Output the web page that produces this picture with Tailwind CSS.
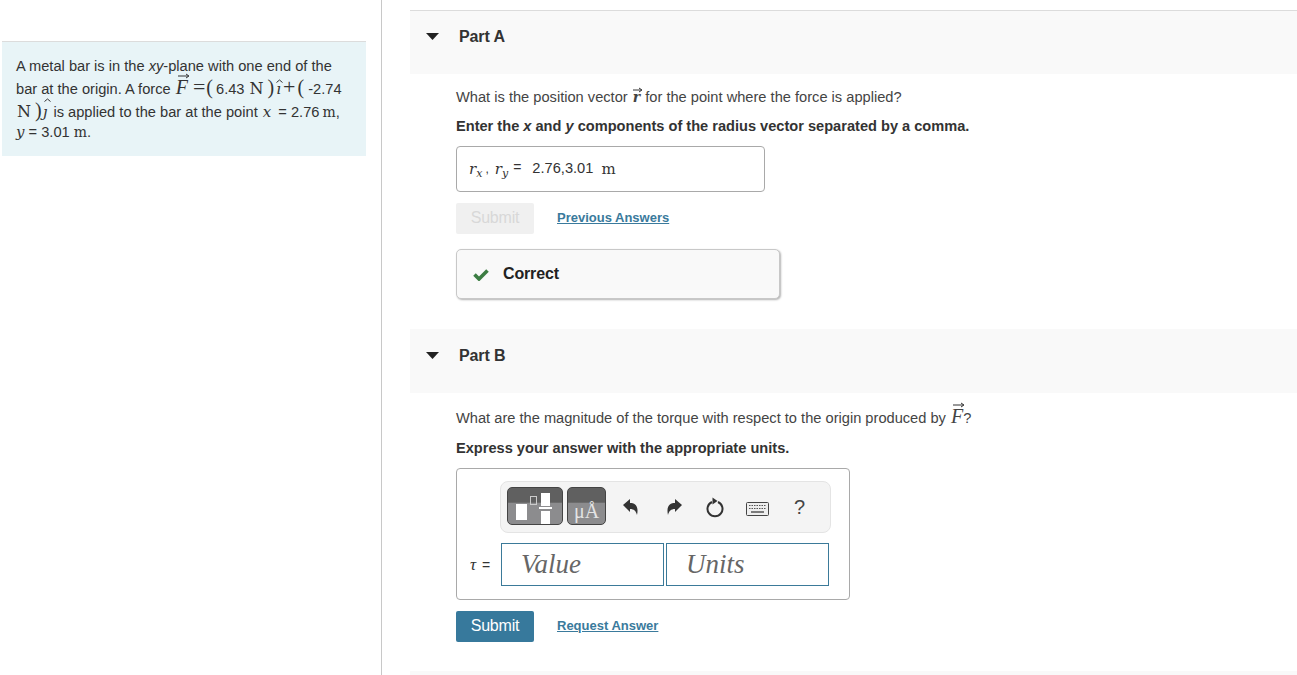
<!DOCTYPE html>
<html lang="en"><head><meta charset="utf-8"><title>Part</title>
<script src="https://cdn.jsdelivr.net/npm/@tailwindcss/browser@4"></script></head>
<body class="bg-white">
<div class="flex w-[1297px] h-[675px] overflow-hidden font-['Liberation_Sans',Arial,sans-serif] text-[14.65px] text-[#333]">
  <aside class="w-[382px] shrink-0 h-full border-r border-[#c8c8c8] pt-[41px] pl-[2px] pr-[15px]">
    <div class="h-[115px] bg-[#e8f4f7] border-t border-[#dcdcdc] pl-[14px] pr-[10px] pt-[13px] leading-[23px]">
      <p class="whitespace-nowrap">A metal bar is in the <i>xy</i>-plane with one end of the</p>
      <p class="whitespace-nowrap">bar at the origin. A force <span class="relative ml-[1px] font-['Liberation_Serif',serif] italic text-[20px] leading-[0]">F<svg class="absolute left-[2px] -top-[3px]" width="12" height="6" viewBox="0 0 12 6"><path d="M0 3h10M8 1l3 2-3 2" stroke="#333" fill="none"/></svg></span><span class="ml-[5px] font-['Liberation_Serif',serif] text-[22px] leading-[0]">=</span><span class="ml-[1px] font-['Liberation_Serif',serif] text-[20px] leading-[0]">(</span><span class="ml-[3px]">6.43</span> <span class="ml-[1px] font-['DejaVu_Serif',serif] text-[16px] leading-[0]">N</span><span class="ml-[4px] font-['Liberation_Serif',serif] text-[20px] leading-[0]">)</span><span class="relative ml-[2px] font-['DejaVu_Serif',serif] italic text-[15px] leading-[0]">ı<svg class="absolute left-[0px] -top-[1px]" width="7" height="4" viewBox="0 0 7 4"><path d="M.5 3.500 3.500 1l3 2.500" stroke="#333" fill="none"/></svg></span><span class="ml-[2px] font-['Liberation_Serif',serif] text-[22px] leading-[0]">+</span><span class="ml-[2px] font-['Liberation_Serif',serif] text-[20px] leading-[0]">(</span><span class="ml-[4px]">-2.74</span></p>
      <p class="whitespace-nowrap"><span class="ml-[1px] font-['DejaVu_Serif',serif] text-[16px] leading-[0]">N</span><span class="ml-[4px] font-['Liberation_Serif',serif] text-[20px] leading-[0]">)</span><span class="relative ml-[1px] font-['DejaVu_Serif',serif] italic text-[15px] leading-[0]">ȷ<svg class="absolute left-[1px] -top-[5px]" width="7" height="4" viewBox="0 0 7 4"><path d="M.5 3.500 3.500 1l3 2.500" stroke="#333" fill="none"/></svg></span><span class="ml-[2px]"> is applied to the bar at the point</span> <span class="ml-[1px] font-['DejaVu_Serif',serif] italic text-[15px] leading-[0]">x</span> <span class="ml-[3px]">= 2.76</span> <span class="-ml-[1px] font-['DejaVu_Serif',serif] text-[14px] leading-[0]">m</span>,</p>
      <p class="whitespace-nowrap -mt-[3px]"><span class="font-['DejaVu_Serif',serif] italic text-[15px] leading-[0]">y</span> = 3.01 <span class="font-['DejaVu_Serif',serif] text-[14px] leading-[0]">m</span>.</p>
    </div>
  </aside>
  <main class="flex-1 pl-[28px] pt-[10px]">
    <section class="h-[64px] bg-[#f9f9f9] border-t border-[#dcdcdc] flex items-start pt-[17px]">
      <svg class="ml-[16px] mt-[5px]" width="13" height="7" viewBox="0 0 13 7"><path d="M0 0h13L6.500 7z" fill="#222"/></svg>
      <h2 class="ml-[20px] font-bold text-[16px] text-[#333] leading-[18px] tracking-[-0.1px]">Part A</h2>
    </section>
    <div class="pl-[46px]">
      <p class="mt-[14px] leading-[18px] text-[#444] whitespace-nowrap">What is the position vector <span class="relative mx-[1px] font-['DejaVu_Serif',serif] italic font-bold text-[14px] leading-[0]">r<svg class="absolute left-0 -top-[2px]" width="10" height="6" viewBox="0 0 10 6"><path d="M0 3h8M6 1l3 2-3 2" stroke="#333" fill="none"/></svg></span> for the point where the force is applied?</p>
      <p class="mt-[11px] font-bold text-[14.6px] leading-[18px] whitespace-nowrap">Enter the <i>x</i> and <i>y</i> components of the radius vector separated by a comma.</p>
      <div class="mt-[11px] w-[309px] h-[46px] border border-[#a9a9a9] rounded-[4px] flex items-center pl-[12px]">
        <span class="font-['DejaVu_Serif',serif] italic text-[15px]">r<sub class="text-[11px]">x</sub></span><span class="text-[12px] ml-[3px] mr-[6px]">,</span><span class="font-['DejaVu_Serif',serif] italic text-[15px]">r<sub class="text-[11px]">y</sub></span>
        <span class="ml-[5px] -mt-[4px] text-[14px]">=</span><span class="ml-[11px]">2.76,3.01</span><span class="ml-[8px] font-['DejaVu_Serif',serif] text-[15px] leading-[1]">m</span>
      </div>
      <div class="mt-[11px] flex items-center">
        <button class="w-[78px] h-[31px] bg-[#f0f0f0] text-[#d8d8d8] text-[16px] tracking-[-0.2px] rounded-[2px] leading-[27px] pb-[2px]">Submit</button>
        <a class="ml-[23px] -mt-[2px] font-bold text-[13px] text-[#3a7a9c] underline" href="#">Previous Answers</a>
      </div>
      <div class="mt-[15px] w-[324px] h-[50px] bg-[#f9f9f9] border border-[#c8c8c8] rounded-[5px] shadow-[1px_1px_2px_rgba(0,0,0,0.3)] flex items-center pl-[16px]">
        <svg width="16" height="13" viewBox="0 0 16 13"><path d="M1.500 6.500 6 11 14.500 2.500" stroke="#3c7d43" stroke-width="3.600" fill="none"/></svg>
        <span class="ml-[14px] font-bold text-[16px] tracking-[-0.15px] text-[#222]">Correct</span>
      </div>
    </div>
    <section class="mt-[30px] h-[64px] bg-[#f9f9f9] flex items-start pt-[18px]">
      <svg class="ml-[16px] mt-[5px]" width="13" height="7" viewBox="0 0 13 7"><path d="M0 0h13L6.500 7z" fill="#222"/></svg>
      <h2 class="ml-[20px] font-bold text-[16px] text-[#333] leading-[18px] tracking-[-0.1px]">Part B</h2>
    </section>
    <div class="pl-[46px]">
      <p class="mt-[16px] leading-[18px] text-[#444] whitespace-nowrap">What are the magnitude of the torque with respect to the origin produced by <span class="relative ml-[1px] font-['Liberation_Serif',serif] italic text-[20px] leading-[0]">F<svg class="absolute left-[2px] -top-[3px]" width="12" height="6" viewBox="0 0 12 6"><path d="M0 3h10M8 1l3 2-3 2" stroke="#333" fill="none"/></svg></span>?</p>
      <p class="mt-[12px] font-bold text-[14.6px] leading-[18px]">Express your answer with the appropriate units.</p>
      <div class="mt-[11px] w-[394px] h-[132px] border border-[#a9a9a9] rounded-[4px] pt-[12px] pl-[43px]">
        <div class="w-[331px] h-[52px] bg-[#f4f4f4] border border-[#e4e4e4] rounded-[8px] flex items-center pl-[6px]">
          <div class="relative -mt-[2px] w-[56px] h-[38px] rounded-[5px] border border-[#444] bg-[linear-gradient(#606060_0,#606060_40%,#8c8c8e_41%,#8c8c8e_100%)]">
            <span class="absolute left-[8px] top-[16px] w-[11px] h-[16px] bg-white"></span>
            <span class="absolute left-[22px] top-[8px] w-[7px] h-[9px] border border-[#ccc]"></span>
            <span class="absolute left-[33px] top-[5px] w-[9px] h-[13px] bg-white"></span>
            <span class="absolute left-[31px] top-[19px] w-[13px] h-[2px] bg-white"></span>
            <span class="absolute left-[33px] top-[23px] w-[9px] h-[13px] bg-white"></span>
          </div>
          <div class="relative -mt-[2px] ml-[4px] w-[39px] h-[38px] rounded-[5px] border border-[#444] bg-[linear-gradient(#606060_0,#606060_40%,#8c8c8e_41%,#8c8c8e_100%)] text-[#e4e4e4] font-['Liberation_Serif',serif] text-[20px] text-center pt-[12px] leading-[22px]">μÅ</div>
          <svg class="ml-[16px]" width="17" height="18" viewBox="0 0 17 18"><path d="M1 7 8 1v4c5 0 9 3 7 12-1-4-3-6-7-6v3z" fill="#333"/></svg>
          <svg class="ml-[27px]" width="17" height="18" viewBox="0 0 17 18"><path d="M16 7 9 1v4C4 5 0 8 2 17c1-4 3-6 7-6v3z" fill="#333"/></svg>
          <svg class="ml-[22px]" width="20" height="22" viewBox="0 0 20 22"><path d="M7 6a7.500 7.500 0 1 0 6 0" stroke="#333" stroke-width="2" fill="none"/><path d="M7.500 1.500v7l5-3.500z" fill="#333"/></svg>
          <svg class="ml-[21px] mt-[4px]" width="23" height="14" viewBox="0 0 23 14"><rect x=".5" y=".5" width="22" height="13" rx="1" fill="#eee" stroke="#444"/><path d="M3 3.500h17M3 6.500h17" stroke="#555" stroke-dasharray="1.500 1"/><path d="M5 10h13" stroke="#555" stroke-width="1.500"/></svg>
          <span class="ml-[25px] text-[#444] text-[20px] leading-[1]">?</span>
        </div>
        <div class="mt-[10px] -ml-[30px] flex items-center">
          <span class="w-[31px] text-[14px] whitespace-nowrap"><i class="font-['Liberation_Serif',serif] text-[17px]">τ</i><span class="ml-[2px]"> =</span></span>
          <div class="w-[163px] h-[43px] border border-[#3b7a99] pl-[19px] font-['Liberation_Serif',serif] italic text-[27px] leading-[40px] text-[#666]">Value</div>
          <div class="ml-[2px] w-[163px] h-[43px] border border-[#3b7a99] pl-[19px] font-['Liberation_Serif',serif] italic text-[27px] leading-[40px] text-[#666]">Units</div>
        </div>
      </div>
      <div class="mt-[11px] flex items-center">
        <button class="w-[78px] h-[31px] bg-[#37799c] text-white text-[16px] tracking-[-0.2px] rounded-[2px] leading-[27px] pb-[2px]">Submit</button>
        <a class="ml-[23px] -mt-[2px] font-bold text-[13px] text-[#3a7a9c] underline" href="#">Request Answer</a>
      </div>
    </div>
    <div class="mt-[29px] h-[4px] bg-[#f9f9f9]"></div>
  </main>
</div>
</body></html>
